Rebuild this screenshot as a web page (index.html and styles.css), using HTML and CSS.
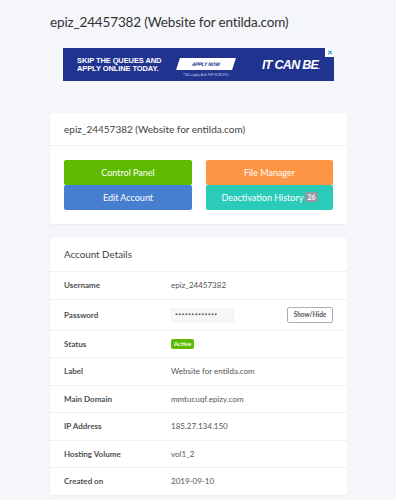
FILE: index.html
```html
<!DOCTYPE html>
<html lang="en">
<head>
    <meta charset="UTF-8">
    <meta name="viewport" content="width=device-width, initial-scale=1.0">
    <title>epiz_24457382 (Website for entilda.com)</title>
    <link rel="stylesheet" href="styles.css">
</head>
<body>
    <div class="page">
        <h1 class="page-title">epiz_24457382 (Website for entilda.com)</h1>

        <div class="ad">
            <div class="ad-banner">
                <div class="ad-copy">SKIP THE QUEUES AND<br>APPLY ONLINE TODAY.</div>
                <div class="ad-cta">
                    <span class="ad-apply">APPLY NOW</span>
                    <span class="ad-terms">*T&amp;Cs apply. Auth FSP NCRCP25.</span>
                </div>
                <div class="ad-slogan">IT CAN BE<span class="ad-dots">..</span></div>
                <span class="ad-close">&#x2715;</span>
            </div>
        </div>

        <div class="card">
            <div class="card-header">epiz_24457382 (Website for entilda.com)</div>
            <div class="card-body">
                <div class="btn-grid">
                    <a class="btn btn-green" href="#">Control Panel</a>
                    <a class="btn btn-orange" href="#">File Manager</a>
                    <a class="btn btn-blue" href="#">Edit Account</a>
                    <a class="btn btn-teal" href="#">Deactivation History <span class="count">26</span></a>
                </div>
            </div>
        </div>

        <div class="card">
            <div class="card-header card-header-lg">Account Details</div>
            <table class="details">
                <tr><th>Username</th><td>epiz_24457382</td></tr>
                <tr class="row-pass">
                    <th>Password</th>
                    <td>
                        <div class="pass-row">
                            <span class="pass">*************</span>
                            <button class="btn-small">Show/Hide</button>
                        </div>
                    </td>
                </tr>
                <tr><th>Status</th><td><span class="badge">Active</span></td></tr>
                <tr><th>Label</th><td>Website for entilda.com</td></tr>
                <tr><th>Main Domain</th><td>mmtucuqf.epizy.com</td></tr>
                <tr><th>IP Address</th><td>185.27.134.150</td></tr>
                <tr><th>Hosting Volume</th><td>vol1_2</td></tr>
                <tr><th>Created on</th><td>2019-09-10</td></tr>
            </table>
        </div>
    </div>
</body>
</html>
```

FILE: styles.css
```css
body {
    margin: 0;
    background-color: #f5f6fa;
    font-family: Lato, "Open Sans", sans-serif;
    color: #444;
}
.page {
    width: 297px;
    margin: 0 auto 0 50px;
    padding-top: 12px;
}
.page-title {
    font-size: 13.5px;
    font-weight: normal;
    color: #333;
    margin: 0 0 16px;
    line-height: 20px;
    white-space: nowrap;
    letter-spacing: -0.15px;
}

/* ad banner */
.ad {
    display: flex;
    justify-content: center;
    margin-bottom: 32px;
}
.ad-banner {
    position: relative;
    width: 271px;
    height: 33px;
    background-color: #20338f;
    display: flex;
    align-items: center;
    color: #fff;
    font-family: "Liberation Sans", Arial, sans-serif;
    font-weight: bold;
}
.ad-copy {
    font-size: 7.5px;
    line-height: 8px;
    margin-left: 14px;
    width: 94px;
    letter-spacing: -0.1px;
}
.ad-cta {
    display: flex;
    flex-direction: column;
    align-items: center;
    margin-left: 3px;
    width: 64px;
}
.ad-apply {
    display: block;
    width: 56px;
    height: 12px;
    background-color: #fff;
    color: #20338f;
    font-size: 5px;
    line-height: 12px;
    text-align: center;
    transform: skewX(-18deg);
    margin-top: 5px;
    letter-spacing: -0.2px;
}
.ad-terms {
    font-size: 3px;
    font-weight: normal;
    margin-top: 3px;
    color: #c9d0f0;
}
.ad-slogan {
    font-size: 12.5px;
    font-style: italic;
    margin-left: 24px;
    letter-spacing: -0.7px;
}
.ad-dots {
    font-size: 5px;
}
.ad-close {
    position: absolute;
    top: 0;
    right: 0;
    width: 9px;
    height: 9px;
    background-color: #fff;
    color: #3d8fd6;
    font-size: 7px;
    line-height: 9px;
    text-align: center;
}

/* cards */
.card {
    background-color: #fff;
    border-radius: 3px;
    box-shadow: 0 1px 2px rgba(0, 0, 0, 0.05);
    margin-bottom: 14px;
}
.card-header {
    height: 32px;
    line-height: 32px;
    padding: 0 14px;
    font-size: 10px;
    color: #444;
    border-bottom: 1px solid #eef0f4;
}
.card-header-lg {
    height: 33px;
    line-height: 33px;
    font-size: 9.8px;
}
.card-body {
    padding: 14px 14px 14px;
}
.btn-grid {
    display: grid;
    grid-template-columns: 128px 127px;
    column-gap: 14px;
}
.btn {
    display: block;
    height: 25px;
    line-height: 25px;
    text-align: center;
    color: #fff;
    font-size: 9px;
    text-decoration: none;
    border-radius: 2px;
}
.btn-green {
    background-color: #5eba00;
}
.btn-orange {
    background-color: #fd9644;
}
.btn-blue {
    background-color: #467fcf;
}
.btn-teal {
    background-color: #2bcbba;
}
.count {
    display: inline-block;
    background-color: #8f9aa6;
    color: #fff;
    font-size: 7px;
    font-weight: bold;
    line-height: 10px;
    padding: 0 2px;
    border-radius: 2px;
    vertical-align: 1px;
}

/* details table */
.details {
    width: 100%;
    border-collapse: collapse;
    font-size: 8px;
}
.details th,
.details td {
    height: 26.5px;
    padding: 0;
    border-top: 1px solid #eef0f4;
    text-align: left;
    vertical-align: middle;
}
.details tr:first-child th,
.details tr:first-child td {
    border-top: none;
}
.details .row-pass th,
.details .row-pass td {
    height: 30px;
}
.details th {
    width: 107px;
    padding-left: 14px;
    font-weight: bold;
    color: #495057;
}
.details td {
    padding-right: 14px;
    color: #555;
}
.pass-row {
    display: flex;
    align-items: center;
    justify-content: space-between;
}
.pass {
    background-color: #f6f7f9;
    border: 1px solid #f0f1f4;
    padding: 3px 3px 1px;
    width: 55px;
    font-size: 7px;
    letter-spacing: 0.3px;
    color: #333;
}
.btn-small {
    background-color: #fff;
    border: 1px solid #aab0b8;
    border-radius: 2px;
    font-family: Lato, sans-serif;
    font-size: 6.5px;
    font-weight: bold;
    color: #555;
    height: 16px;
    width: 46px;
    padding: 0;
}
.badge {
    display: inline-block;
    background-color: #5eba00;
    color: #fff;
    font-size: 6px;
    font-weight: bold;
    line-height: 10px;
    padding: 0 3px;
    border-radius: 2px;
}
```
